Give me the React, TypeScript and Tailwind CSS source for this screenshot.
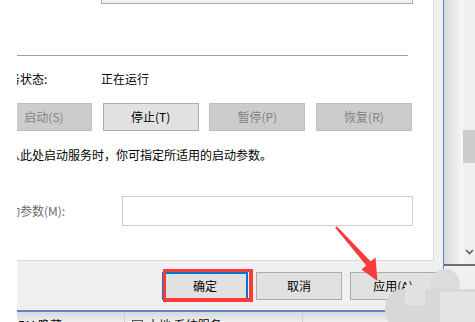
import React from "react";

const font = { fontFamily: '"Noto Sans CJK SC", "Noto Sans", sans-serif' };

function Btn({
  label,
  disabled,
  className = "",
}: {
  label: string;
  disabled?: boolean;
  className?: string;
}) {
  return (
    <div
      className={`flex items-center justify-center h-[28px] border text-[12px] leading-none ${
        disabled
          ? "bg-[#cccccc] border-[#bfbfbf] text-[#838383]"
          : "bg-[#e1e1e1] border-[#adadad] text-black"
      } ${className}`}
    >
      {label}
    </div>
  );
}

export default function App() {
  return (
    <div
      className="relative w-[475px] h-[322px] overflow-hidden bg-white flex text-[12px]"
      style={font}
    >
      {/* white crop margin */}
      <div className="w-[17px] h-full bg-white" />

      {/* dialog + list behind */}
      <div className="w-[427px] flex flex-col">
        <div className="h-[312px] bg-[#f0f0f0] border-r border-b-2 border-[#5a86c8] flex flex-col">
          {/* tab panel */}
          <div className="flex h-[261px]">
            <div className="w-[417px] h-full bg-white border-r border-b border-[#dadada] overflow-hidden">
              <div className="ml-[-21px] w-[438px] flex flex-col">
                <div className="ml-[105px] w-[312px] h-[4px] bg-[#f0f0f0] border border-t-0 border-[#adadad]" />
                <div className="mt-[51px] w-[412px] h-px bg-[#a0a0a0]" />
                <div className="mt-[15px] flex h-[16px] items-center leading-[16px] text-black">
                  <div className="w-[105px]">服务状态:</div>
                  <div>正在运行</div>
                </div>
                <div className="mt-[16px] flex gap-[10.66px]">
                  <Btn label="启动(S)" disabled className="w-[96px]" />
                  <Btn label="停止(T)" className="w-[96px]" />
                  <Btn label="暂停(P)" disabled className="w-[96px]" />
                  <Btn label="恢复(R)" disabled className="w-[96px]" />
                </div>
                <div className="mt-[16px] h-[16px] leading-[16px] text-black whitespace-nowrap">
                  当从此处启动服务时，你可指定所适用的启动参数。
                </div>
                <div className="mt-[33px] flex items-center">
                  <div className="w-[126px] text-[#6d6d6d] leading-[16px]">启动参数(M):</div>
                  <div className="w-[291px] h-[30px] bg-white border border-[#cccccc]" />
                </div>
              </div>
            </div>
          </div>

          {/* bottom buttons */}
          <div className="flex-1 flex justify-end items-start gap-2 pt-[11px] pr-[7px]">
            <Btn label="确定" className="w-[86px] !border-2 !border-[#0078d7]" />
            <Btn label="取消" className="w-[86px]" />
            <Btn label="应用(A)" className="w-[86px]" />
          </div>
        </div>

        {/* services list row behind the dialog */}
        <div className="flex-1 flex bg-gradient-to-b from-[#d8d8d8] to-[#efefef] text-black overflow-hidden">
          <div className="w-[108px] border-r border-[#d0d0d0] pl-[1px] pt-[5px] leading-[16px] whitespace-nowrap">
            RM 隐藏
          </div>
          <div className="w-[178px] border-r border-[#d0d0d0] pl-[7px] pt-[5px] leading-[16px] whitespace-nowrap flex gap-1">
            <span className="mt-[3px] w-[11px] h-[11px] border border-[#555]" />
            <span>本地 系统服务</span>
          </div>
          <div className="flex-1" />
        </div>
      </div>

      {/* window behind, right side */}
      <div className="flex-1 flex flex-col bg-[#f0f0f0]">
        <div className="h-[264px] flex">
          <div className="w-[19px] h-full bg-gradient-to-r from-[#dadada] to-[#f6f6f6]" />
          <div className="flex-1 h-full bg-[#f0f0f0] flex flex-col items-center">
            <div className="mt-[130px] w-full h-[33px] bg-[#cdcdcd]" />
            <svg className="mt-[86px]" width="9" height="6" viewBox="0 0 9 6">
              <polyline points="1,1 4.5,4.5 8,1" fill="none" stroke="#606060" strokeWidth="1.6" />
            </svg>
          </div>
        </div>
        <div className="h-[2px] bg-[#707070]" />
        <div className="flex-1 bg-[#f0f0f0]" />
      </div>

      {/* red annotation box */}
      <div className="absolute left-[163px] top-[269px] w-[90px] h-[33px] border-[3px] border-r-4 border-b-4 border-[#ff3a3a]" />

      {/* red arrow */}
      <svg className="absolute inset-0 pointer-events-none" width="475" height="322">
        <polygon
          points="336.8,226.3 370.7,261.5 375.5,257.5 377.5,281 361.5,269.5 366.3,265.5 335.2,227.7"
          fill="#f83c3c"
        />
      </svg>

      {/* blurred watermark */}
      <div className="absolute left-[430px] top-[269px] w-[30px] h-[30px] rounded-full bg-[#dcdcdc]" />
      <div className="absolute left-[385px] top-[289px] w-[95px] h-[40px] rounded-l-[18px] bg-[#d8d8d8]" />
      <div className="absolute left-[405px] top-[285px] w-[20px] h-[20px] bg-[#e2e2e2]" />
      <div className="absolute left-[440px] top-[292px] w-[40px] h-[30px] bg-[#e4e4e4]" />
    </div>
  );
}
